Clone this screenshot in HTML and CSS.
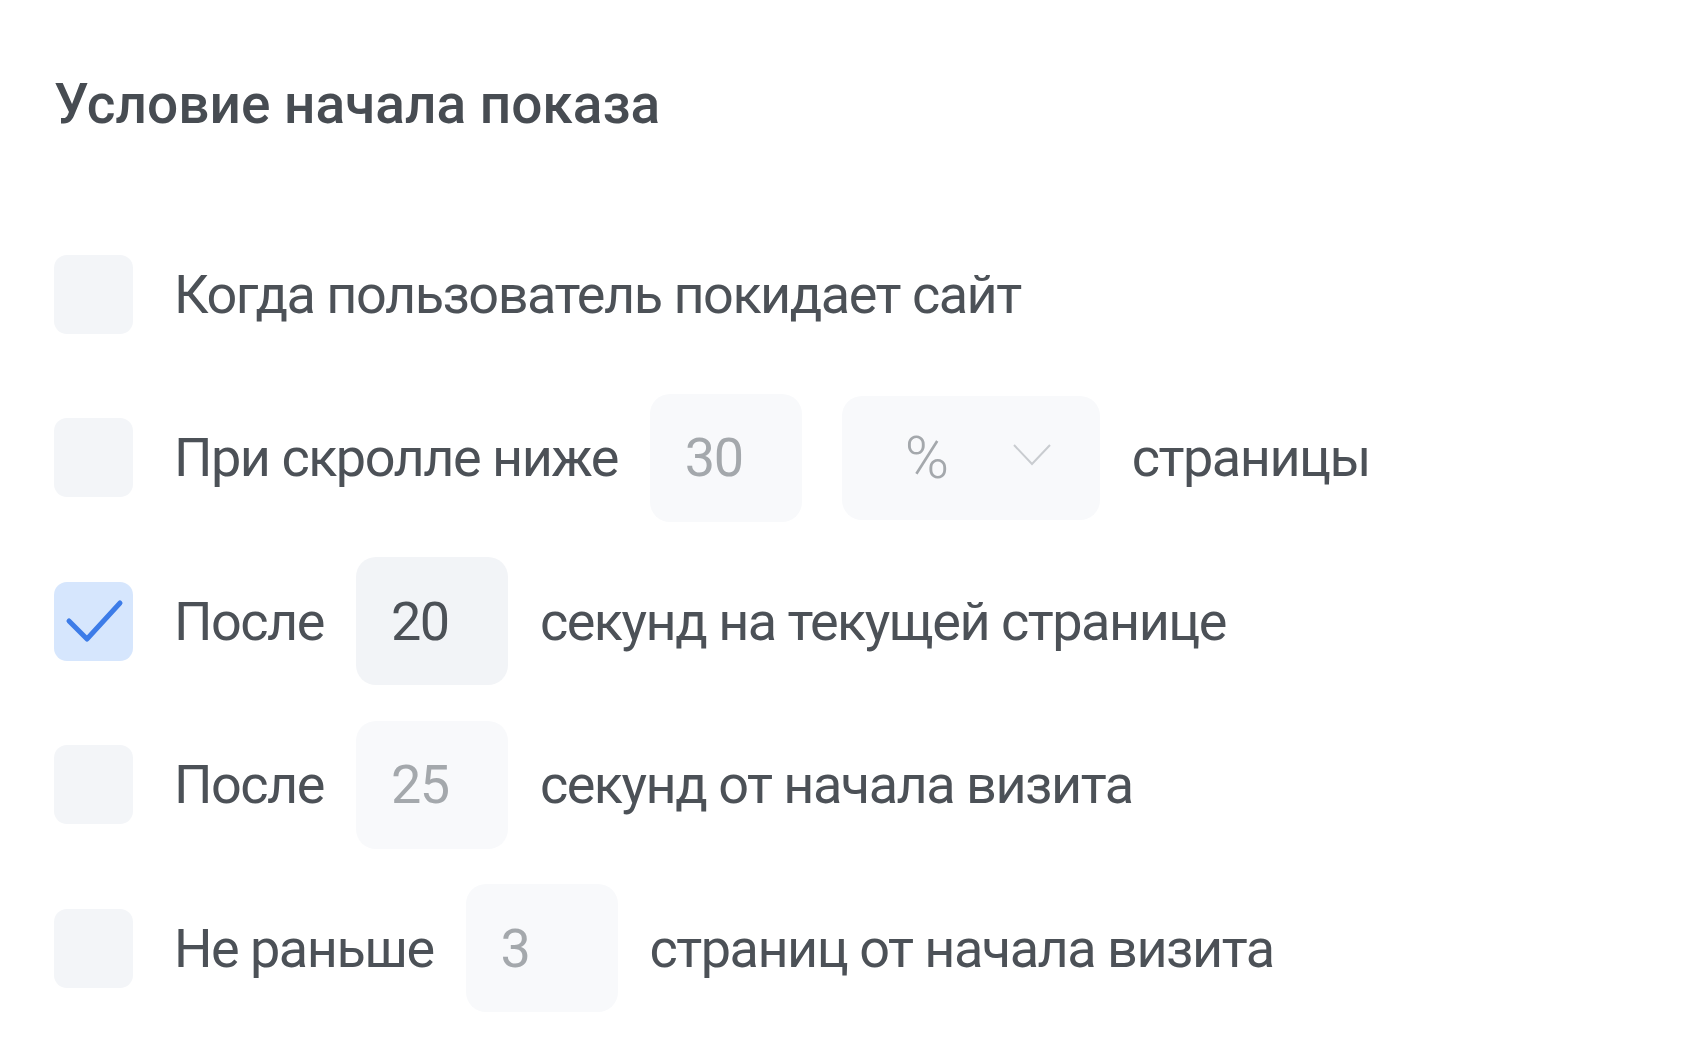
FILE: index.html
```html
<!DOCTYPE html>
<html lang="ru">
<head>
    <meta charset="UTF-8">
    <title>Условие начала показа</title>
    <link rel="stylesheet" href="styles.css">
</head>
<body>

    <!-- Show condition block -->
    <div class="section">
        <h2 class="section-title">Условие начала показа</h2>

        <div class="conditions">
            <div class="row">
                <span class="check"></span>
                <span class="label">Когда пользователь покидает сайт</span>
            </div>

            <div class="row">
                <span class="check"></span>
                <span class="label">При скролле ниже</span>
                <span class="field field-off field-pair">30</span>
                <span class="select field-off">
                    <span class="unit">%</span>
                    <svg class="chevron" width="38" height="22" viewBox="0 0 38 22">
                        <polyline points="1,1 19,20 37,1" fill="none" stroke="#c9ccd0" stroke-width="2"/>
                    </svg>
                </span>
                <span class="label">страницы</span>
            </div>

            <div class="row">
                <span class="check checked">
                    <svg width="79" height="79" viewBox="0 0 79 79">
                        <polyline points="15,39 33,57 66,21" fill="none" stroke="#3d7ce8" stroke-width="5" stroke-linecap="round" stroke-linejoin="round"/>
                    </svg>
                </span>
                <span class="label">После</span>
                <span class="field">20</span>
                <span class="label">секунд на текущей странице</span>
            </div>

            <div class="row">
                <span class="check"></span>
                <span class="label">После</span>
                <span class="field field-off">25</span>
                <span class="label">секунд от начала визита</span>
            </div>

            <div class="row">
                <span class="check"></span>
                <span class="label">Не раньше</span>
                <span class="field field-off">3</span>
                <span class="label">страниц от начала визита</span>
            </div>
        </div>
    </div>

</body>
</html>
```

FILE: styles.css
```css
body {
    font-family: Roboto, "Noto Sans", sans-serif;
    background-color: #fff;
    color: #4c5157;
    margin: 0;
    padding: 0;
}
.section {
    padding: 73px 0 0 54px;
}
.section-title {
    margin: 0;
    font-size: 55px;
    line-height: 62px;
    font-weight: 500;
    color: #474c52;
}
.conditions {
    display: flex;
    flex-direction: column;
    gap: 35.5px;
    margin-top: 95px;
}
.row {
    display: flex;
    align-items: center;
    gap: 32px;
    min-height: 128px;
    font-size: 54px;
    letter-spacing: -1.5px;
}
.check {
    width: 79px;
    height: 79px;
    border-radius: 13px;
    background-color: #f3f5f8;
    margin-right: 9px;
    flex-shrink: 0;
}
.check svg {
    display: block;
}
.check.checked {
    background-color: #d6e6fd;
}
.label {
    white-space: nowrap;
}
.field {
    box-sizing: border-box;
    width: 152px;
    height: 128px;
    border-radius: 20px;
    background-color: #f2f4f7;
    padding-left: 35px;
    display: flex;
    align-items: center;
    color: #4c5157;
}
.field-off {
    background-color: #f8f9fb;
    color: #a4a8ac;
}
.field-pair {
    margin-right: 8px;
}
.select {
    box-sizing: border-box;
    width: 258px;
    height: 124px;
    border-radius: 20px;
    padding: 0 49px 0 63px;
    display: flex;
    align-items: center;
    justify-content: space-between;
}
.unit {
    font-size: 60px;
    font-weight: 300;
}
.chevron {
    margin-top: -6px;
}
```
